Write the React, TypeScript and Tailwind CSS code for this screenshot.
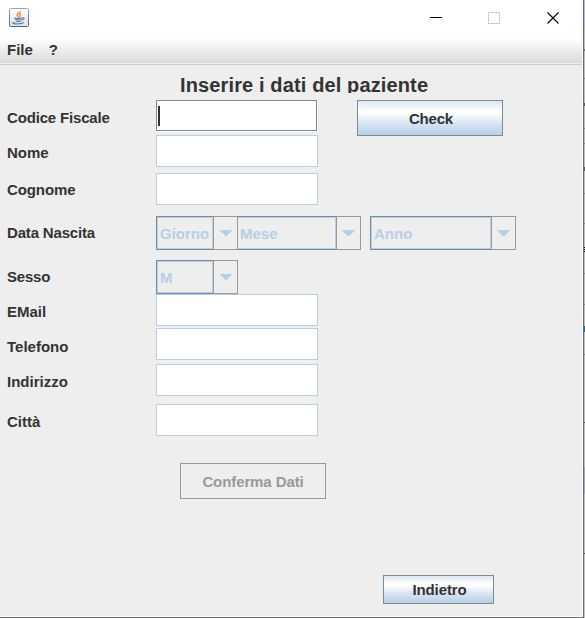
import React from "react";

const label = "text-[15px] leading-[18px] font-bold text-[#333333] whitespace-pre";

function Row({ text, h, mt, pt, tracking = "", children }: {
  text: string; h: string; mt: string; pt: string; tracking?: string; children: React.ReactNode;
}) {
  return (
    <div className={`flex items-start ${h} ${mt}`}>
      <label className={`w-[149px] shrink-0 ${label} ${pt} ${tracking}`}>{text}</label>
      {children}
    </div>
  );
}

function Field() {
  return <div className="h-8 w-[162px] border border-[#b8cfe5] bg-white" />;
}

function Combo({ text, width, tracking = "", joined = false, wide = false }: {
  text: string; width: string; tracking?: string; joined?: boolean; wide?: boolean;
}) {
  return (
    <div className={`flex h-[34px] ${width}`}>
      <div className={`flex-1 min-w-0 border-y border-[#7a8a99] ${joined ? "" : "border-l"}`}>
        <div className={`h-8 border-[#b8cfe5] ${joined ? "border-y border-r pl-[2px]" : "border pl-[2px]"} pt-[7px] text-[15px] leading-[18px] font-bold text-[#b8cfe5] whitespace-pre ${tracking}`}>
          {text}
        </div>
      </div>
      <div className={`flex w-[25px] shrink-0 border border-[#999999] pt-[13px] ${wide ? "pl-[5px]" : "pl-[6px]"}`}>
        {wide ? (
          <svg width="13" height="6" viewBox="0 0 13 6" shapeRendering="crispEdges" fill="#b8cfe5">
            <path d="M0 0h13v1h-1v1h-1v1h-1v1h-1v1h-1v1h-3v-1h-1v-1h-1v-1h-1v-1h-1v-1h-1z" />
          </svg>
        ) : (
          <svg width="12" height="6" viewBox="0 0 12 6" shapeRendering="crispEdges" fill="#b8cfe5">
            <path d="M0 0h12v1h-1v1h-1v1h-1v1h-1v1h-1v1h-2v-1h-1v-1h-1v-1h-1v-1h-1v-1h-1z" />
          </svg>
        )}
      </div>
    </div>
  );
}

const metal = "border border-[#7a8a99] bg-[linear-gradient(180deg,#dde8f3_0%,#ffffff_30%,#ffffff_36%,#dce7f2_62%,#b8cfe5_100%)]";

function JavaIcon() {
  return (
    <svg width="20" height="19" viewBox="0 0 20 19">
      <defs>
        <linearGradient id="frame" x1="0" y1="0" x2="0" y2="1">
          <stop stopColor="#91aabd" />
          <stop offset="1" stopColor="#49677f" />
        </linearGradient>
        <linearGradient id="face" x1="0" y1="0" x2="0" y2="1">
          <stop stopColor="#ffffff" />
          <stop offset="1" stopColor="#e2e2e4" />
        </linearGradient>
      </defs>
      <rect x=".5" y=".5" width="19" height="18" rx="1" fill="url(#face)" stroke="url(#frame)" />
      <g fill="none" stroke="#ef8b3b" strokeWidth="1.4">
        <path d="M11.5 3C11.5 5 7.5 5.5 8.2 7.2C8.5 8 9.2 8.2 9 9.2" />
        <path d="M12 5.7C9.5 6.8 11.8 7.5 10.2 9.2" />
      </g>
      <g fill="none" stroke="#6485a0" strokeWidth="1.2">
        <path d="M5 9.8C7 10.5 10 10.5 12.8 9.8M13 9.8C16 9.3 15.5 11.7 12.5 12.2M6 11.4C8 12 10 12 12.5 11.5M6.6 13C8 13.7 10.3 13.7 12 13" />
        <path d="M5.5 14C1.5 15 5 16 9 15.8C12 15.7 14 15.2 14.8 14.6" />
      </g>
    </svg>
  );
}

const edgeMarks = "bg-[linear-gradient(180deg,#aebdd0_0px,#aebdd0_29px,#bfbfbf_29px,#bfbfbf_49px,#777_49px,#777_51px,#bfbfbf_51px,#bfbfbf_78px,#888_78px,#888_79px,#bfbfbf_79px,#bfbfbf_103px,#3d6480_103px,#6b5b42_106px,#bfbfbf_106px,#bfbfbf_128px,#888_128px,#888_129px,#bfbfbf_129px,#bfbfbf_143px,#888_143px,#888_144px,#bfbfbf_144px,#bfbfbf_167px,#35627f_167px,#776044_171px,#bfbfbf_171px,#bfbfbf_193px,#888_193px,#888_194px,#bfbfbf_194px,#bfbfbf_223px,#888_223px,#888_224px,#bfbfbf_224px,#bfbfbf_247px,#111_247px,#111_248px,#bfbfbf_248px,#bfbfbf_249px,#111_249px,#111_250px,#bfbfbf_250px,#bfbfbf_251px,#111_251px,#111_252px,#bfbfbf_252px,#bfbfbf_273px,#888_273px,#888_274px,#bfbfbf_274px,#bfbfbf_304px,#888_304px,#888_305px,#bfbfbf_305px,#bfbfbf_326px,#266a92_326px,#266a92_332px,#bfbfbf_332px,#bfbfbf_354px,#888_354px,#888_355px,#bfbfbf_355px,#bfbfbf_422px,#555_422px,#555_423px,#bfbfbf_423px,#bfbfbf_467px,#9eacbe_467px,#9eacbe_494px,#bfbfbf_494px,#bfbfbf_553px,#555_553px,#555_554px,#c4c4c4_554px,#c4c4c4_618px)]";

export default function App() {
  return (
    <div className="flex h-[618px] w-[585px] overflow-hidden bg-white font-['Liberation_Sans',Arial,sans-serif]">
      <main className="flex h-[618px] w-[584px] flex-col border-r border-b border-[#6b6b6b]">
        <header className="flex h-9 shrink-0 items-start bg-white">
          <div className="ml-[9px] mt-2"><JavaIcon /></div>
          <svg className="ml-auto mr-[24px] mt-[11px]" width="129" height="13" viewBox="0 0 129 13" fill="none">
            <path d="M0 6.5h12" stroke="black" />
            <rect x="58.5" y="1.5" width="11" height="11" stroke="#cccccc" />
            <path d="M117.5 1.5l11 11M128.5 1.5l-11 11" stroke="black" strokeWidth="1.1" />
          </svg>
        </header>
        <div className="flex flex-1 flex-col border-r border-b border-white bg-[#eeeeee]">
          <nav className="flex h-[29px] shrink-0 gap-4 border-b border-[#cccccc] bg-[linear-gradient(180deg,#ffffff_0px,#ffffff_2px,#dadada_27px,#eeeeee_27px)] pl-[7px] pt-[5px]">
            <span className={label}>File</span>
            <span className={label}>?</span>
          </nav>
          <section className="pl-[7px]">
            <h1 className="mt-[9px] h-[19px] overflow-hidden pl-[173px] text-[20px] leading-[22px] font-bold tracking-[0.13px] text-[#333333] whitespace-nowrap">
              Inserire i dati del paziente
            </h1>
            <Row text="Codice Fiscale" h="h-[36px]" mt="mt-[7px]" pt="pt-[9px]" tracking="tracking-[-0.17px]">
              <div className="h-[32px] w-[162px] bg-white">
                <div className="h-[31px] w-[161px] border border-[#7a8a99] pl-[1px] pt-[5px]">
                  <div className="h-5 w-[2px] bg-[#333333]" />
                </div>
              </div>
              <button className={`ml-[39px] h-9 w-[146px] pt-[2px] pl-[2px] tracking-[-0.2px] ${label} ${metal}`}>Check</button>
            </Row>
            <Row text="Nome" h="h-8" mt="mt-[-1px]" pt="pt-[9px]"><Field /></Row>
            <Row text="Cognome" h="h-8" mt="mt-[6px]" pt="pt-[8px]" tracking="tracking-[-0.1px]"><Field /></Row>
            <Row text="Data Nascita" h="h-[34px]" mt="mt-[11px]" pt="pt-[8px]" tracking="tracking-[-0.17px]">
              <Combo text="Giorno" width="w-[82px]" />
              <Combo text="Mese" width="w-[123px]" joined wide />
              <div className="w-[9px]" />
              <Combo text="Anno" width="w-[146px]" wide />
            </Row>
            <Row text="Sesso" h="h-[34px]" mt="mt-[10px]" pt="pt-[8px]" tracking="tracking-[-0.2px]">
              <Combo text="M" width="w-[82px]" />
            </Row>
            <Row text="EMail" h="h-8" mt="mt-0" pt="pt-[9px]"><Field /></Row>
            <Row text="Telefono" h="h-8" mt="mt-[2px]" pt="pt-[10px]"><Field /></Row>
            <Row text="Indirizzo" h="h-8" mt="mt-[4px]" pt="pt-[9px]"><Field /></Row>
            <Row text="Città" h="h-8" mt="mt-[8px]" pt="pt-[9px]"><Field /></Row>
            <button className="mt-[27px] ml-[173px] block h-9 w-[146px] border border-[#999999] pt-[2px] text-[15px] leading-[18px] font-bold tracking-[-0.1px] text-[#999999]">
              Conferma Dati
            </button>
            <button className={`mt-[76px] ml-[376px] block h-[29px] w-[111px] pl-[2px] tracking-[-0.1px] ${label} ${metal}`}>Indietro</button>
          </section>
        </div>
      </main>
      <div className={`h-[618px] w-px ${edgeMarks}`} />
    </div>
  );
}
